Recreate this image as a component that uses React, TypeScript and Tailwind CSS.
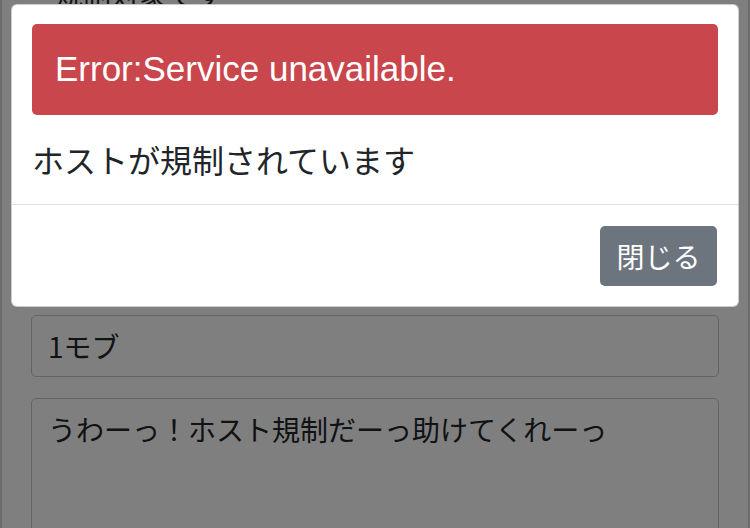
import React from "react";

const jp = { fontFamily: '"Noto Sans CJK JP", "Noto Sans", sans-serif' };
const lat = { fontFamily: '"Liberation Sans", "Noto Sans CJK JP", sans-serif' };

export default function App() {
  return (
    <div className="relative w-[750px] h-[528px] overflow-hidden bg-white">
      {/* page content behind the backdrop */}
      <div className="flex flex-col border-l-2 border-r-2 border-[#d8d8d8] h-full">
        <div className="h-[4px] bg-[#dfeeee]" />
        <div className="pl-[53px] -mt-[24px] text-[28px] leading-[36px] text-[#212529]" style={jp}>
          規制対象です
        </div>
        <div className="px-[29px] mt-[303px] flex flex-col gap-[21px]">
          <div
            className="h-[62px] border border-[#c4c9cf] rounded-[5px] pl-[16px] flex items-center text-[28px] text-[#212529]"
            style={jp}
          >
            1モブ
          </div>
          <div
            className="h-[160px] border border-[#c4c9cf] rounded-[5px] pl-[16px] pt-[10px] text-[28px] leading-[40px] text-[#212529]"
            style={jp}
          >
            うわーっ！ホスト規制だーっ助けてくれーっ
          </div>
        </div>
      </div>

      {/* backdrop */}
      <div className="absolute inset-0 bg-black/50" />

      {/* modal */}
      <div className="absolute left-[11px] top-[4px] w-[728px] bg-white border border-black/20 rounded-[6px] flex flex-col">
        <div className="px-[20px] pt-[19px] pb-[21px]">
          <div
            className="h-[91px] bg-[#c9464c] rounded-[5px] pl-[23px] flex items-center text-white text-[35px]"
            style={lat}
          >
            Error:Service unavailable.
          </div>
          <p className="mt-[20px] leading-[48px] text-[32px] text-[#212529]" style={jp}>
            ホストが規制されています
          </p>
        </div>
        <div className="border-t border-[#dee2e6] pt-[21px] pb-[20px] px-[21px] flex justify-end">
          <button
            className="h-[60px] w-[117px] bg-[#6c757d] rounded-[5px] text-white text-[28px] flex items-center justify-center"
            style={jp}
          >
            閉じる
          </button>
        </div>
      </div>
    </div>
  );
}
